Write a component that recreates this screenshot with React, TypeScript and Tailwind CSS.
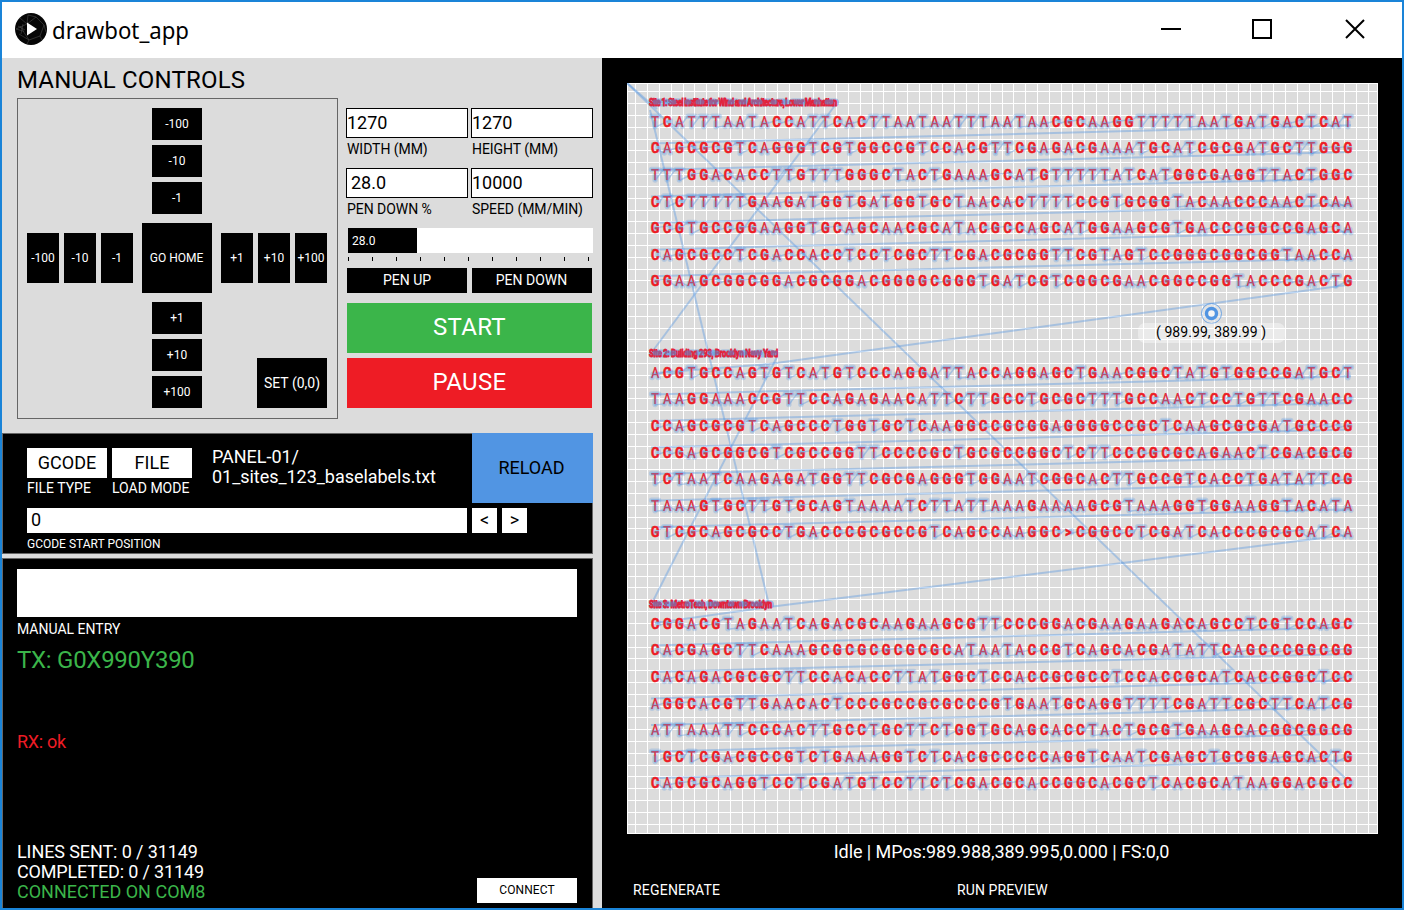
import React from "react";

const SPACING = 11.811;
const GRID = Array.from({ length: 63 }, (_, k) => Math.floor(8.9 + SPACING * k) + 0.5);

type Block = { label: string; width: number; rows: string[] };

const BLOCKS: Block[] = [
  {
    label: "Site 1: Steel Institute for Wind and Architecture, Lower Manhattan",
    width: 188,
    rows: [
      "TCATTTAATACCATTCACTTAATAATTTAATAACGCAAGGTTTTTAATGATGACTCAT",
      "CAGCGCGTCAGGGTCGTGGCCGTCCACGTTCGAGACGAAATGCATCGCGATGCTTGGG",
      "TTTGGACACCTTGTTTGGGCTACTGAAAGCATGTTTTTATCATGGCGAGGTTACTGGC",
      "CTCTTTTTGAAGATGGTGATGGTGCTAACACTTTTCCGTGCGGTACAACCCAACTCAA",
      "GCGTGCCGGAAGGTGCAGCAACGCATACGCCAGCATGGAAGCGTGACCCGGCCGAGCA",
      "CAGCGCCTCGACCACCTCCTCGCTTCGACGCGGTTCGTAGTCCGGGCGGCGGTAACCA",
      "GGAAGCGGCGGACGCGGACGGGGCGGGTGATCGTCGGCGAACGGCCGGTACCCGACTG",
    ],
  },
  {
    label: "Site 2: Building 293, Brooklyn Navy Yard",
    width: 129,
    rows: [
      "ACGTGCCAGTGTCATGTCCCAGGATTACCAGGAGCTGAACGGCTATGTGGCCGATGCT",
      "TAAGGAAACCGTTCCAGAGAACATTCTTGCCTGCGCTTTGCCAACTCCTGTTCGAACC",
      "CCAGCGCGTCAGCCCTGGTGCTCAAGGCCGCGGAGGGGCCGCTCAAGCGCGATGCCCG",
      "CCGAGCGGCGTCGCCGGTTCCCCGCTGCGCCGGCTCTTCCCGCGCAGAACTCGACGCG",
      "TCTAATCAAGAGATGGTTCGCGAGGGTGGAATCGGCACTTGCCGTCACCTGATATTCG",
      "TAAAGTGCTTGTGCAGTAAAATCTTATTAAAGAAAAGCGTAAAGGTGGAAGGTACATA",
      "GTCGCAGCGCCTGACCCGCGCCGTCAGCCAAGGC>CGGCCTCGATCACCCGCGCATCA",
    ],
  },
  {
    label: "Site 3: MetroTech, Downtown Brooklyn",
    width: 123,
    rows: [
      "CGGACGTAGAATCAGACGCAAGAAGCGTTCCCGGACGAAGAAGACAGCCTCGTCCAGC",
      "CACGAGCTTCAAAGCGCGCGCGCGCATAATACCGTCAGCACGATATTCAGCCCGGCGG",
      "CACAGACGCGCTTCCACACCTTATGGCTCCACCGCGCCTCCACCGCATCACCGGCTCC",
      "AGGCACGTTGAACACTCCCGCCGCGCCCGTGAATGCAGGTTTTCGATTCGCTTCATCG",
      "ATTAAATTCCCACTTGCCTGCTTCTGGTGCAGCACCTACTGCGTGAAGCACGGCGGCG",
      "TGCTCGACGCCGTCTGAAAGGTCTCACGCCCCCAGGTCAATCGAGCTGCGGAGCACTG",
      "CAGCGCAGGTCCTCGATGTCCTTCTCGACGCACCGGCACGCTCACGCATAAGGACGCC",
    ],
  },
];

const NARROW = 0.82;
const charX = (i: number) => 28.1 + i * 12.155;
const rowY = (b: number, r: number) => 38.3 + b * 251 + r * 26.58;

// Pen entry and exit of each glyph, relative to its centre.
const ENTRY: Record<string, [number, number]> = { T: [-4, -5], A: [-4, 5], C: [4, -2], G: [4, -2], ">": [-2, -3] };
const EXIT: Record<string, [number, number]> = { T: [0, 6], A: [3, 2], C: [4, 2], G: [1, 0], ">": [-2, 3] };

function travel(row: string, y: number) {
  let d = "";
  for (let i = 0; i < row.length - 1; i++) {
    const a = EXIT[row[i]];
    const b = ENTRY[row[i + 1]];
    d += `M${charX(i) + a[0]} ${y + a[1]}L${charX(i + 1) + b[0]} ${y + b[1]}`;
  }
  return d;
}

function penDots(row: string, y: number) {
  let d = "";
  for (let i = 0; i < row.length; i++) {
    const x = charX(i);
    if (row[i] === "T") d += `M${x - 3.5} ${y - 5}H${x + 3.5}M${x} ${y + 1}V${y + 5.5}`;
    else if (row[i] === "A") d += `M${x - 3} ${y + 5}V${y + 5.1}M${x + 3} ${y + 5}V${y + 5.1}M${x - 2} ${y + 2}H${x + 2}`;
    else if (row[i] === "G") d += `M${x} ${y + 0.5}H${x + 2}`;
    else d += `M${x + 3} ${y - 1}V${y + 1}`;
  }
  return d;
}

function Row({ row, y }: { row: string; y: number }) {
  return (
    <g>
      <path d={travel(row, y)} stroke="#5094e2" strokeOpacity={0.38} strokeWidth={1.5} />
      <path d={penDots(row, y)} stroke="#5094e2" strokeOpacity={0.26} strokeWidth={5.5} strokeLinecap="round" />
      <text transform={`scale(${NARROW} 1)`} y={y + 5.5} fontSize={15.5} textAnchor="middle">
        {row.split("").map((c, i) => {
          const thin = c === "A" || c === "T";
          return (
            <tspan
              key={i}
              x={(charX(i) / NARROW).toFixed(2)}
              fontWeight={thin ? 500 : 700}
              fill={thin ? "#e02e3e" : "#ed1c24"}
              stroke={thin ? "none" : "#ed1c24"}
              strokeWidth={0.6}
            >
              {c}
            </tspan>
          );
        })}
      </text>
      <path d={penDots(row, y)} stroke="#5094e2" strokeOpacity={0.32} strokeWidth={2.6} strokeLinecap="round" />
    </g>
  );
}

function Preview() {
  const links: string[] = [];
  BLOCKS.forEach((_, b) => {
    for (let r = 0; r < 6; r++) links.push(`M724 ${rowY(b, r) + 4}L24 ${rowY(b, r + 1) - 4.5}`);
  });
  return (
    <svg width="751" height="751" viewBox="0 0 751 751" fill="none" className="block bg-[#dcdcdc] font-['Roboto',sans-serif]">
      <g stroke="#ffffff" shapeRendering="crispEdges">
        {GRID.map((p) => (
          <path key={p} d={`M${p} 0V751M0 ${p}H751`} />
        ))}
        <rect x={0.5} y={0.5} width={750} height={750} />
      </g>
      <g stroke="#5094e2" strokeOpacity={0.38} strokeWidth={2}>
        {links.map((d) => (
          <path key={d} d={d} />
        ))}
        <path d="M0 0L721 698" />
        <path d="M0 0L30 26" />
        <path d="M23 27L142 522" />
        <path d="M209 21L25 269" />
        <path d="M150 274L25 520" />
        <path d="M720 202L142 281L28 290" />
        <path d="M720 452L142 524L28 540" />
      </g>
      {BLOCKS.map((b, bi) => (
        <g key={b.label}>
          <path
            d={`M26 ${19.5 + bi * 251}H${20 + b.width}`}
            stroke="#5094e2"
            strokeOpacity={0.5}
            strokeWidth={8}
            strokeLinecap="round"
            strokeDasharray="13 8 5 9"
          />
          <text
            transform="scale(0.72 1)"
            x={22 / 0.72}
            y={22.7 + bi * 251}
            fontSize={10.5}
            fontWeight={700}
            fill="#e3203a"
            stroke="#e3203a"
            strokeWidth={0.9}
            textLength={b.width / 0.72}
            lengthAdjust="spacing"
          >
            {b.label}
          </text>
          <path
            d={`M28 ${19 + bi * 251}H${20 + b.width}`}
            stroke="#5094e2"
            strokeOpacity={0.5}
            strokeWidth={5}
            strokeLinecap="round"
            strokeDasharray="4 8 7 13 2 9"
          />
          {b.rows.map((row, ri) => (
            <Row key={ri} row={row} y={rowY(bi, ri)} />
          ))}
        </g>
      ))}
      <circle cx={584.5} cy={230.5} r={10} stroke="#5094e2" strokeWidth={0.8} fill="#e4e8ec" fillOpacity={0.5} />
      <circle cx={584.5} cy={230.5} r={5} stroke="#5094e2" strokeWidth={3.4} fill="#f4f4f4" />
      <rect x={511} y={240} width={147} height={20} rx={7} fill="#ffffff" fillOpacity={0.4} />
      <text x={584} y={254} fontSize={14} textAnchor="middle" fill="#000000" textLength={110}>
        ( 989.99, 389.99 )
      </text>
    </svg>
  );
}

const center = "flex items-center justify-center";

function Jog({ children, tall = false }: { children: React.ReactNode; tall?: boolean }) {
  return (
    <button className={`${center} shrink-0 whitespace-nowrap bg-black text-[12px] text-white ${tall ? "h-[50px] w-8" : "h-8 w-[50px]"}`}>
      {children}
    </button>
  );
}

function JogPanel() {
  return (
    <div className="flex h-[321px] w-[321px] flex-col border border-[#666] px-[9px] pt-[9px]">
      <div className="flex flex-col items-center gap-[5px] pr-[1px]">
        <Jog>-100</Jog>
        <Jog>-10</Jog>
        <Jog>-1</Jog>
      </div>
      <div className="mt-[9px] flex items-center justify-between pr-px">
        <div className="flex gap-[5px]">
          <Jog tall>-100</Jog>
          <Jog tall>-10</Jog>
          <Jog tall>-1</Jog>
        </div>
        <button className={`${center} h-[70px] w-[70px] whitespace-nowrap bg-black pr-px text-[12px] text-white`}>GO HOME</button>
        <div className="flex gap-[5px]">
          <Jog tall>+1</Jog>
          <Jog tall>+10</Jog>
          <Jog tall>+100</Jog>
        </div>
      </div>
      <div className="mt-[9px] flex items-end">
        <div className="ml-[125px] flex flex-col gap-[5px]">
          <Jog>+1</Jog>
          <Jog>+10</Jog>
          <Jog>+100</Jog>
        </div>
        <button className={`${center} ml-[55px] h-[50px] w-[70px] whitespace-nowrap bg-black text-[14px] text-white`}>SET (0,0)</button>
      </div>
    </div>
  );
}

function Field({ value, label, indent = false }: { value: string; label: string; indent?: boolean }) {
  return (
    <div className="h-[60px] w-[122px]">
      <div className={`flex h-[30px] items-center border border-black bg-white pb-[2px] text-[18px] ${indent ? "pl-1" : ""}`}>{value}</div>
      <div className="whitespace-nowrap pl-px pt-[3px] text-[14px] leading-4 tracking-[-0.05px]">{label}</div>
    </div>
  );
}

function Settings() {
  return (
    <div className="ml-2 w-[247px] pt-[10px]">
      <div className="flex flex-wrap gap-x-[3px]">
        <Field value="1270" label="WIDTH (MM)" />
        <Field value="1270" label="HEIGHT (MM)" />
        <Field value="28.0" label="PEN DOWN %" indent />
        <Field value="10000" label="SPEED (MM/MIN)" />
      </div>
      <div className="ml-[2px] flex h-[25px] w-[245px] bg-white">
        <div className="flex w-[69px] items-center bg-black pl-1 text-[12px] text-white">28.0</div>
      </div>
      <div className="ml-[2px] mt-1 flex h-1 w-[241px] justify-between">
        {Array.from({ length: 11 }, (_, i) => (
          <div key={i} className="w-px bg-black" />
        ))}
      </div>
      <div className="ml-px mt-[7px] flex gap-[5px] text-[14px] text-white">
        <button className={`${center} h-[25px] w-[120px] bg-black`}>PEN UP</button>
        <button className={`${center} h-[25px] w-[120px] bg-black pr-px`}>PEN DOWN</button>
      </div>
      <div className="ml-px mt-[10px] flex w-[245px] flex-col gap-[5px] text-[24px] tracking-[0.3px] text-white">
        <button className={`${center} h-[50px] bg-[#3bb54a] pb-[2px]`}>START</button>
        <button className={`${center} h-[50px] bg-[#ee1c25] pb-[2px]`}>PAUSE</button>
      </div>
    </div>
  );
}

function FilePanel() {
  return (
    <div className="flex h-[121px] w-[591px] flex-col border border-[#666] bg-black text-white">
      <div className="-mt-px -mr-px flex h-[70px]">
        <div className="ml-6 mt-[15px] w-[80px]">
          <div className={`${center} h-[30px] bg-white pb-[2px] text-[18px] text-black`}>GCODE</div>
          <div className="whitespace-nowrap pt-[2px] text-[14px] leading-4">FILE TYPE</div>
        </div>
        <div className="ml-[5px] mt-[15px] w-[80px]">
          <div className={`${center} h-[30px] bg-white pb-[2px] text-[18px] text-black`}>FILE</div>
          <div className="whitespace-nowrap pt-[2px] text-[14px] leading-4">LOAD MODE</div>
        </div>
        <div className="ml-5 mt-[14px] w-[260px] text-[18px] leading-5 tracking-[-0.04px]">
          PANEL-01/
          <br />
          01_sites_123_baselabels.txt
        </div>
        <button className={`${center} w-[121px] bg-[#5195e3] pb-[2px] pr-[2px] text-[18px] text-black`}>RELOAD</button>
      </div>
      <div className="ml-6 mt-[5px] flex gap-[5px] text-[18px] text-black">
        <div className="flex h-[25px] w-[440px] items-center bg-white pb-[2px] pl-1">0</div>
        <button className={`${center} h-[25px] w-[25px] bg-white pb-[2px]`}>&lt;</button>
        <button className={`${center} h-[25px] w-[25px] bg-white pb-[2px]`}>&gt;</button>
      </div>
      <div className="ml-6 mt-1 text-[12px] leading-[14px]">GCODE START POSITION</div>
    </div>
  );
}

function Console() {
  return (
    <div className="mt-1 flex w-[591px] flex-1 flex-col border border-b-0 border-[#666] bg-black pl-[14px] pt-[10px] text-white">
      <div className="h-12 w-[560px] bg-white" />
      <div className="mt-1 text-[14px] leading-4">MANUAL ENTRY</div>
      <div className="mt-[9px] text-[24px] leading-7 tracking-[-0.27px] text-[#3bb54a]">TX: G0X990Y390</div>
      <div className="mt-[58px] text-[18px] leading-5 tracking-[-0.3px] text-[#ee1c25]">RX: ok</div>
      <div className="mt-[90px] flex items-end">
        <div className="w-[460px] text-[18px] leading-5">
          <div className="tracking-[-0.1px]">LINES SENT: 0 / 31149</div>
          <div className="tracking-[-0.15px]">COMPLETED: 0 / 31149</div>
          <div className="text-[#3bb54a]">CONNECTED ON COM8</div>
        </div>
        <button className={`${center} relative top-px h-[25px] w-[100px] bg-white pb-px text-[12px] tracking-[0.1px] text-black`}>CONNECT</button>
      </div>
    </div>
  );
}

function TitleBar() {
  return (
    <div className="flex h-14 items-center bg-white pl-[13px]">
      <svg width="32" height="32" viewBox="0 0 32 32" className="-mt-[2px]">
        <circle cx="16" cy="16" r="16" fill="#060606" />
        <path
          d="M1 16L12 11L21 4L29 12L25 23L14 27L4 21M12 11L5 5M21 4L13 2M29 12L31 19M25 23L27 27M14 27L12 31M1 16L8 18L14 27M5 13L9 19M3 13L10 17M8 11L6 21M13 2L12 11"
          fill="none"
          stroke="#4a4a4a"
          strokeWidth="0.6"
        />
        <path d="M12 9.500L22 16L12 22.500Z" fill="#ffffff" />
      </svg>
      <div className="ml-[5px] font-['Noto_Sans',sans-serif] text-[24px] leading-8">
        <span className="inline-block origin-left scale-x-[0.925]">drawbot_app</span>
      </div>
      <div className="ml-auto mr-[36px] flex items-center text-black">
        <svg width="206" height="24" viewBox="0 0 206 24" fill="none" stroke="#000" strokeWidth="2" className="-mt-[2px]">
          <path d="M1 12H21" />
          <rect x="93" y="3" width="18" height="18" />
          <path d="M186 3L204 21M204 3L186 21" />
        </svg>
      </div>
    </div>
  );
}

export default function App() {
  return (
    <div className="flex h-[910px] w-[1404px] flex-col overflow-hidden border-2 border-[#1a84d8] bg-black font-['Roboto',sans-serif] text-black">
      <TitleBar />
      <div className="flex min-h-0 flex-1">
        <div className="flex w-[600px] flex-col bg-[#dcdcdc]">
          <h1 className="h-10 pl-[15px] pt-[6px] text-[24px] leading-8 tracking-[0.18px]">MANUAL CONTROLS</h1>
          <div className="flex h-[335px] pl-[15px]">
            <JogPanel />
            <Settings />
          </div>
          <FilePanel />
          <Console />
        </div>
        <div className="flex flex-1 flex-col pl-[25px] pt-[25px] text-white">
          <Preview />
          <div className="mt-2 w-[749px] text-center text-[18px] leading-5 tracking-[-0.07px]">Idle | MPos:989.988,389.995,0.000 | FS:0,0</div>
          <div className="mt-5 flex pl-[6px] text-[14px] leading-4">
            <div className="w-[324px] tracking-[0.2px]">REGENERATE</div>
            <div className="tracking-[0.1px]">RUN PREVIEW</div>
          </div>
        </div>
      </div>
    </div>
  );
}
